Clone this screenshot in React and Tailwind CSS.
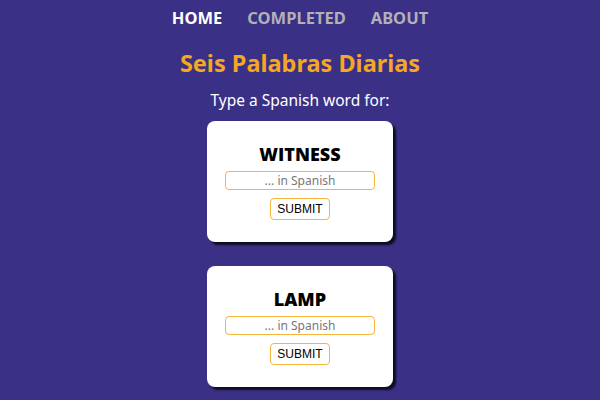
import { useState } from "react";

const words = ["WITNESS", "LAMP"];

function WordCard({ word }) {
  const [value, setValue] = useState("");

  return (
    <div className="w-[186px] h-[121px] bg-white rounded-[8px] shadow-[3px_3px_2px_rgba(0,0,0,0.75)] flex flex-col items-center pt-[22px]">
      <h2 className="text-[18px] leading-[22px] font-extrabold text-black font-['Open_Sans',sans-serif]">{word}</h2>
      <input
        value={value}
        onChange={e => setValue(e.target.value)}
        placeholder="... in Spanish"
        className="mt-[6px] w-[150px] h-[19px] border border-[#f7b43c] rounded-[4px] text-center text-[12px] text-black placeholder:text-[#777] outline-none font-['Noto_Sans',sans-serif]"
      />
      <button className="mt-[8px] w-[60px] h-[22px] border border-[#f7b43c] rounded-[4px] text-[12px] text-black bg-white font-['Liberation_Sans',Arial,sans-serif]">
        SUBMIT
      </button>
    </div>
  );
}

export default function App() {
  return (
    <div className="w-[600px] h-[400px] overflow-hidden bg-[#3a3085] flex flex-col items-center font-['Noto_Sans',sans-serif]">
      <nav className="flex gap-[25px] pt-[6px] text-[16.5px] font-bold leading-[24px]">
        <a className="text-white">HOME</a>
        <a className="text-[#b3b0b8]">COMPLETED</a>
        <a className="text-[#b3b0b8]">ABOUT</a>
      </nav>
      <h1 className="mt-[17px] text-[23.5px] leading-[32px] font-bold text-[#f5a623]">Seis Palabras Diarias</h1>
      <p className="mt-[10px] text-[15.5px] leading-[22px] text-white">Type a Spanish word for:</p>
      <div className="mt-[10px] flex flex-col gap-[24px]">
        {words.map(w => (
          <WordCard key={w} word={w} />
        ))}
      </div>
    </div>
  );
}
